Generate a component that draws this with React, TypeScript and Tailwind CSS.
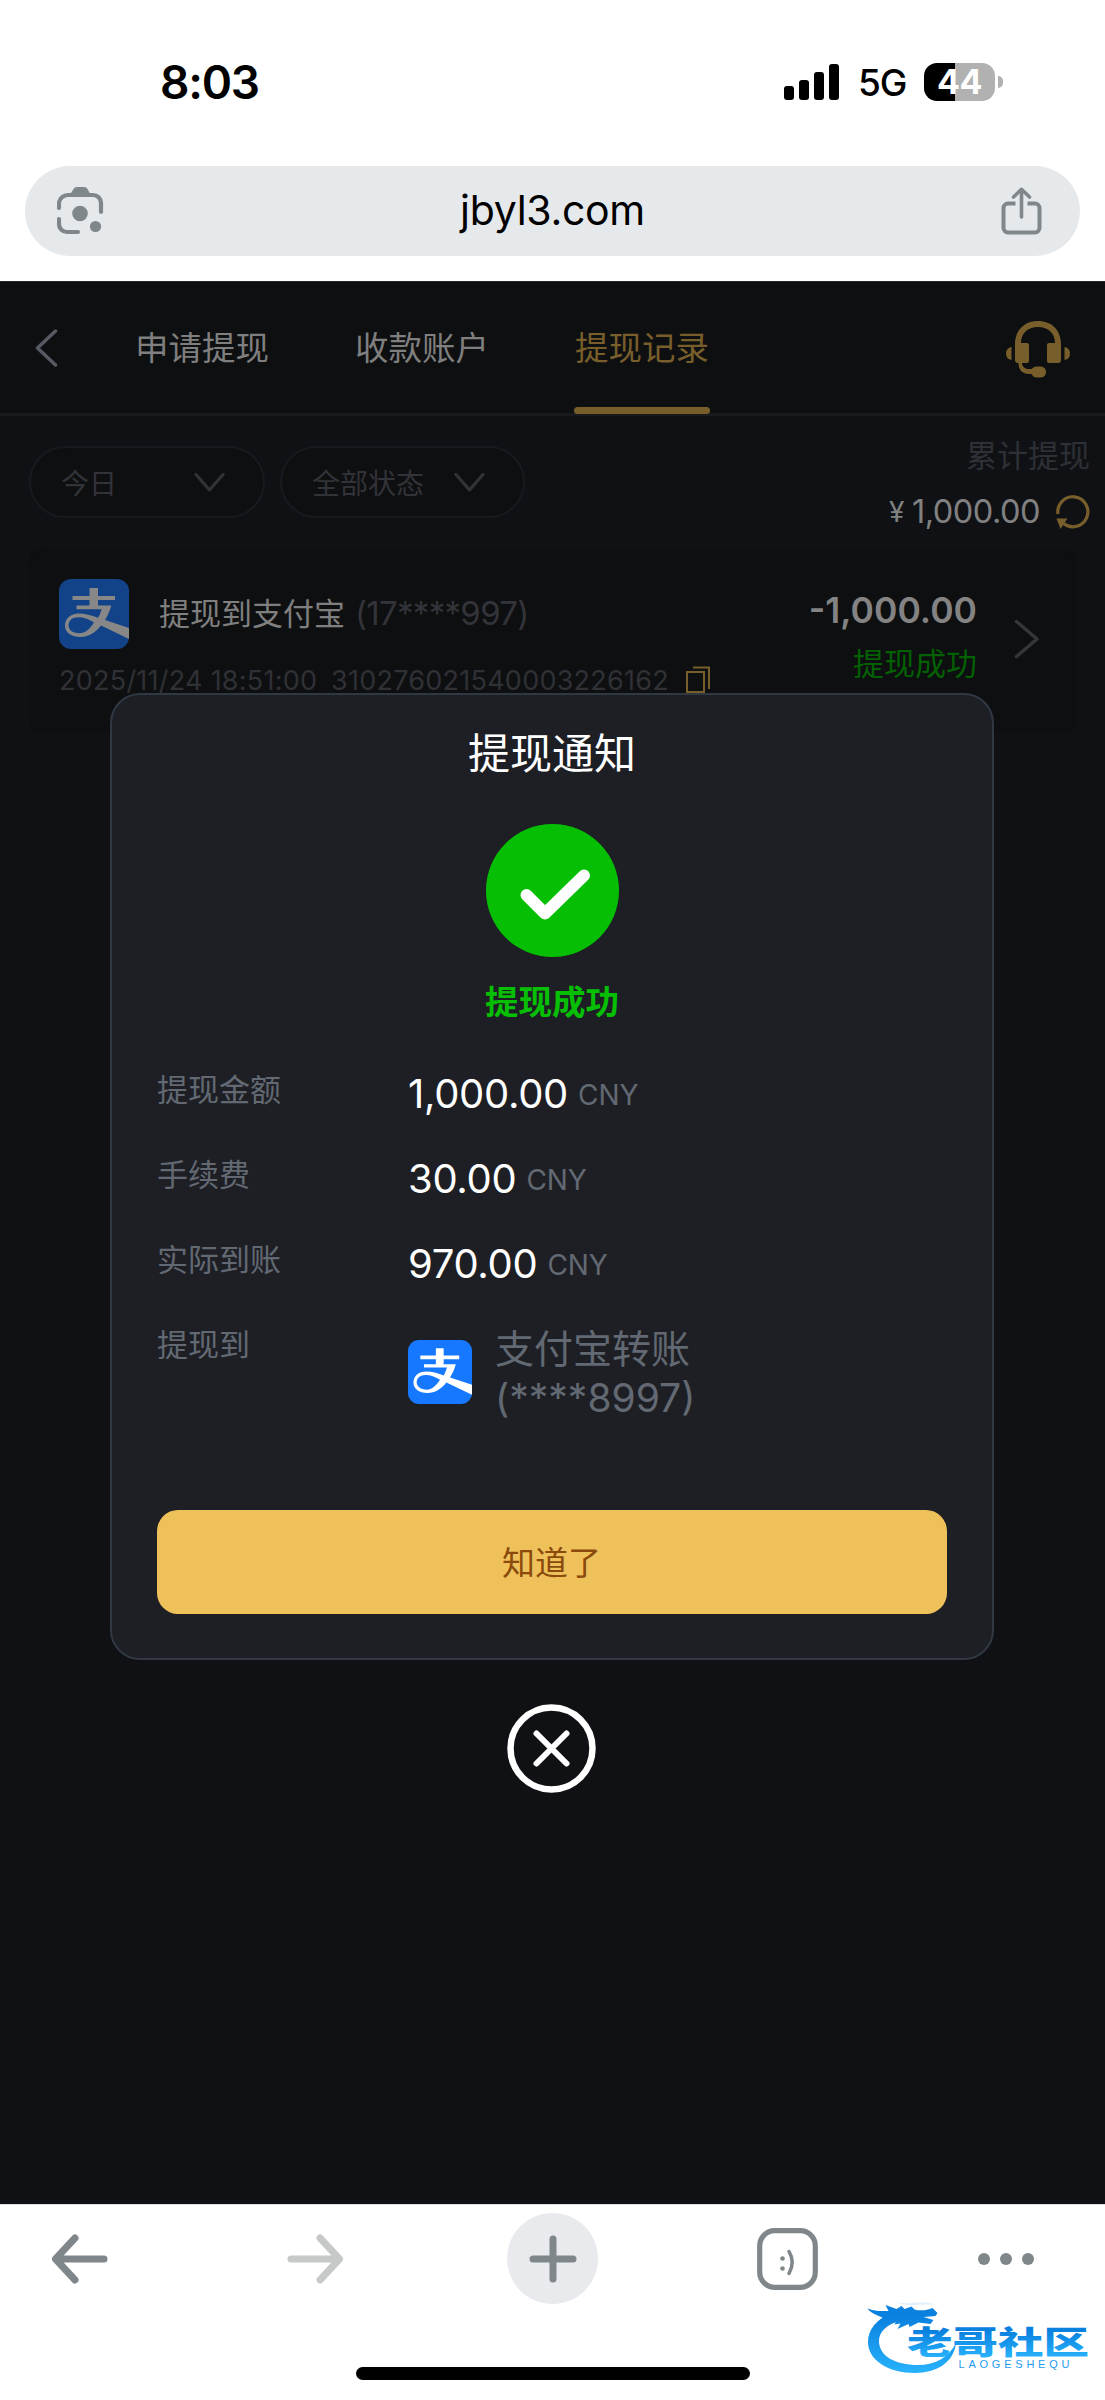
import { ReactNode } from 'react';

interface StrokeIconProps {
  d: string;
  className?: string;
  width: number;
  height: number;
  strokeWidth: number;
}

interface DetailRowProps {
  label: string;
  children: ReactNode;
}

const tabs = ['申请提现', '收款账户', '提现记录'];

const amounts = [
  { label: '提现金额', value: '1,000.00' },
  { label: '手续费', value: '30.00' },
  { label: '实际到账', value: '970.00' },
];

function StrokeIcon({ d, className, width, height, strokeWidth }: StrokeIconProps) {
  return (
    <svg
      className={className}
      width={width}
      height={height}
      viewBox={`0 0 ${width} ${height}`}
      fill="none"
      stroke="currentColor"
      strokeWidth={strokeWidth}
      strokeLinecap="round"
      strokeLinejoin="round"
    >
      <path d={d} />
    </svg>
  );
}

function AlipayIcon({ className }: { className?: string }) {
  return (
    <svg className={className} viewBox="0 0 70 70" fill="none">
      <rect width="70" height="70" rx="12" fill="#1677ff" />
      <path d="M30.500 9h8.500v8H56v4H39v5.500h13.300C50.800 32 48.500 37 46 41L70 49v11L42 46.500C36 54 29.500 58 21.500 58 11.500 58 6 53 6 46.500 6 39.500 11.500 34.500 20 34.500c6 0 12 1.800 19 4.300 1.700-2.700 2.800-5.400 3.600-8.600H17.500v-3.700h13V21h-17v-4h17z" fill="#fff" />
      <path d="M35 43.500C29.500 40 24.500 38.300 19.500 38.300c-6.500 0-10 3.500-10 8 0 5 4.500 8 11 8 5.500 0 10-4 14.500-10.800z" fill="#1677ff" />
    </svg>
  );
}

function StatusBar() {
  return (
    <div className="flex h-[166px] items-start justify-between pl-[160px] pr-[102px] pt-[58px]">
      <span className="text-[46px] font-semibold leading-[48px] tracking-[-1.2px]">8:03</span>
      <div className="flex items-center pt-1">
        <svg width="56" height="36" viewBox="0 0 56 36" className="mr-[18px]">
          <rect x="0" y="22" width="10" height="14" rx="3" />
          <rect x="15" y="16" width="10" height="20" rx="3" />
          <rect x="30" y="8" width="10" height="28" rx="3" />
          <rect x="45" y="0" width="10" height="36" rx="3" />
        </svg>
        <span className="mt-[3px] w-[66px] text-[37px] font-[450] leading-[36px] tracking-[-1px]">5G</span>
        <div className="flex h-[38px] w-[71px] items-center justify-center rounded-[13px] bg-[linear-gradient(90deg,#000_44%,#b1b1b1_44%)] text-[34px] font-bold tracking-[-0.5px] text-white">
          44
        </div>
        <div className="ml-[3px] h-[12px] w-[5px] rounded-r-full bg-[#b1b1b1]" />
      </div>
    </div>
  );
}

function AddressBar() {
  return (
    <div className="mx-[25px] mb-[25px] flex h-[90px] items-center justify-between rounded-full bg-[#e6e9ec] pl-[32px] pr-[38px] text-[#80878a]">
      <svg width="47" height="48" viewBox="0 0 47 48" fill="none">
        <path d="M2 21v-5.500A9 9 0 0 1 11 8h25a8 8 0 0 1 8 8v9M2 32v5a8 8 0 0 0 8 8h11" stroke="currentColor" strokeWidth="4.200" strokeLinecap="round" />
        <path d="M13 7.500l3.500-5.500Q17.500 0 20 0h7q2.500 0 3.500 2l3 5.500z" fill="currentColor" />
        <circle cx="23" cy="26.500" r="7.800" fill="currentColor" />
        <circle cx="38.500" cy="39.500" r="5.600" fill="currentColor" />
      </svg>
      <span className="-mt-[3px] text-[41px] leading-[50px] tracking-[-0.3px] text-black">jbyl3.com</span>
      <svg width="41" height="48" viewBox="0 0 41 48" fill="none" stroke="currentColor" strokeLinecap="round" strokeLinejoin="round">
        <path d="M14.500 16.500H7a4.500 4.500 0 0 0-4.500 4.500v20A4.500 4.500 0 0 0 7 45.500h27a4.500 4.500 0 0 0 4.500-4.500V21a4.500 4.500 0 0 0-4.500-4.500h-7.500" strokeWidth="4" strokeLinecap="butt" />
        <path d="M20.500 30V3M12.500 10l8-7.700 8 7.700" strokeWidth="3.600" />
      </svg>
    </div>
  );
}

function HeadsetIcon() {
  return (
    <svg width="64" height="57" viewBox="0 0 64 57" fill="#785e2b">
      <path d="M9 23C9 9 18.500 0 32 0s23 9 23 23v16q0 3-3 3H43q-2 0-2-2V24q0-2 2-2h6C49 12.500 42.500 6 32 6S15 12.500 15 22h6q2 0 2 2v16q0 2-2 2h-5c.5 4 3 6 7 6h2.500q2-2.500 5-2.500h3Q40 45.500 40 51t-6.500 5.500h-3q-3 0-5-3.500H23C16.500 53 12.500 49 12.500 42H12q-3 0-3-3z" />
      <path d="M5.500 26v13Q0 38 0 32.500T5.500 26zM58.500 26v13q5.500-1 5.500-6.500T58.500 26z" />
    </svg>
  );
}

function PageHeader() {
  return (
    <header className="flex h-[135px] border-b-[3px] border-t border-b-[#191a1d] border-t-[#26272a] bg-[#0e0f10] pl-[34px] pr-[35px]">
      <StrokeIcon className="mt-[47px] text-[#555a63]" width={24} height={38} strokeWidth={3.5} d="M21.500 2L3.500 19l18 17" />
      <nav className="ml-[76px] flex flex-1 gap-[84px]">
        {tabs.map((tab) => (
          <button
            key={tab}
            className={
              tab === '提现记录'
                ? 'flex h-[132px] w-[136px] flex-col justify-between pt-[42px] text-[33.500px] leading-[48px] text-[#785e2b]'
                : 'flex h-[132px] w-[136px] flex-col pt-[42px] text-[33.500px] leading-[48px] text-[#7f7f7f]'
            }
          >
            {tab}
            {tab === '提现记录' && <span className="h-[7px] w-full rounded-full bg-[#785e2b]" />}
          </button>
        ))}
      </nav>
      <div className="mt-[39px]">
        <HeadsetIcon />
      </div>
    </header>
  );
}

function Filters() {
  return (
    <div className="flex h-[133px] justify-between pl-[29px] pr-[15px]">
      <div className="flex gap-[15px] pt-[30px] text-[28px] text-[#323338]">
        <div className="flex h-[72px] w-[236px] items-center justify-between rounded-full border-2 border-[#191a20] bg-[#0e0f10] pl-[30px] pr-[38px]">
          <span className="mt-[3px]">今日</span>
          <StrokeIcon width={31} height={21} strokeWidth={3.2} d="M2 2.500L15.500 18 29 2.500" />
        </div>
        <div className="flex h-[72px] w-[245px] items-center justify-between rounded-full border-2 border-[#191a20] bg-[#0e0f10] pl-[30px] pr-[38px]">
          <span className="mt-[3px]">全部状态</span>
          <StrokeIcon width={31} height={21} strokeWidth={3.2} d="M2 2.500L15.500 18 29 2.500" />
        </div>
      </div>
      <div className="flex flex-col items-end pt-[16px]">
        <span className="text-[31px] leading-[48px] text-[#2d3034]">累计提现</span>
        <div className="mt-[8px] flex items-center text-[32.500px] leading-[48px] tracking-[-0.5px] text-[#818181]">
          <span className="mr-[8px] text-[28px]">¥</span>
          <span>1,000.00</span>
          <svg className="ml-[16px]" width="34" height="34" viewBox="0 0 34 34" fill="none">
            <path d="M2 19A15 15 0 1 1 7.500 28.500" stroke="#785e2b" strokeWidth="3.200" />
            <path d="M0.500 23.500h11L4.500 34z" fill="#785e2b" />
          </svg>
        </div>
      </div>
    </div>
  );
}

function RecordCard() {
  return (
    <div className="mx-[29px] flex h-[184px] rounded-xl bg-[#0e0f10] pl-[30px] pr-[36px]">
      <div className="flex-1 pt-[30px]">
        <div className="flex h-[70px] items-center">
          <AlipayIcon className="mr-[30px] h-[70px] w-[70px] opacity-50" />
          <span className="mt-[1px] text-[31px] text-[#7f7f7f]">提现到支付宝</span>
          <span className="ml-[10px] text-[33px] tracking-[-0.7px] text-[#33343a]">(17****997)</span>
        </div>
        <div className="mt-[12px] flex h-[40px] items-center text-[27px] tracking-[0.25px] text-[#303137]">
          <span className="w-[272px]">2025/11/24 18:51:00</span>
          <span>310276021540003226162</span>
          <svg className="ml-[16px] -mt-[2px]" width="26" height="28" viewBox="0 0 26 28" fill="none" stroke="#785e2b" strokeWidth="2">
            <path d="M2 6h17v20H2zM8 1.500h16V23" />
          </svg>
        </div>
      </div>
      <div className="flex flex-col items-end pt-[38px]">
        <span className="text-[35.500px] font-semibold leading-[48px] text-[#838383]">-1,000.00</span>
        <span className="mt-[7px] text-[31px] leading-[44px] text-[#036003]">提现成功</span>
      </div>
      <StrokeIcon className="ml-[37px] mt-[70px] text-[#35363b]" width={26} height={40} strokeWidth={3.5} d="M2.500 2.500L23 20 2.500 37.500" />
    </div>
  );
}

function DetailRow({ label, children }: DetailRowProps) {
  return (
    <div className="flex">
      <span className="w-[251px] pt-[1px] text-[31px] leading-[44px] text-[#626973]">{label}</span>
      {children}
    </div>
  );
}

function NoticeModal() {
  return (
    <div className="absolute left-[110px] top-[412px] flex w-[884px] flex-col items-center">
      <div className="flex h-[967px] w-full flex-col rounded-[30px] border-2 border-[#303843] bg-[#1e1f24] px-[45px]">
        <h2 className="mt-[29px] text-center text-[42px] leading-[60px] text-white">提现通知</h2>
        <svg className="mx-auto mt-[40px]" width="133" height="133" viewBox="0 0 133 133" fill="none">
          <circle cx="66.500" cy="66.500" r="66.500" fill="#06bf04" />
          <path d="M40.500 71L59 89.500 98 51.500" stroke="#fff" strokeWidth="12" strokeLinecap="round" strokeLinejoin="round" />
        </svg>
        <p className="mt-[21px] text-center text-[33.500px] font-bold leading-[48px] text-[#06bf04]">提现成功</p>

        <div className="mt-[41px] flex flex-col gap-[40px]">
          {amounts.map((item) => (
            <DetailRow key={item.label} label={item.label}>
              <p className="flex h-[44px] text-[40px] leading-[54px] tracking-[-0.3px] text-white">
                {item.value}
                <span className="ml-[10px] mt-[1px] text-[28px] tracking-[-0.1px] text-[#626973]">CNY</span>
              </p>
            </DetailRow>
          ))}
          <DetailRow label="提现到">
            <AlipayIcon className="mt-[18px] h-[64px] w-[64px]" />
            <div className="ml-[23px] mt-[2px] text-[39px] leading-[49px] text-[#626973]">
              <p>支付宝转账</p>
              <p>(****8997)</p>
            </div>
          </DetailRow>
        </div>

        <button className="mb-[44px] mt-auto h-[104px] w-full rounded-[21px] bg-[#efc15b] pr-[1px] pt-[4px] text-[33px] text-[#8a4a0b]">
          知道了
        </button>
      </div>
      <button className="mr-[2px] mt-[44px]">
        <svg width="89" height="89" viewBox="0 0 89 89" fill="none" stroke="#fff">
          <circle cx="44.500" cy="44.500" r="41" strokeWidth="6.500" />
          <path d="M29.500 29.500l30 30M59.500 29.500l-30 30" strokeWidth="6" strokeLinecap="round" />
        </svg>
      </button>
    </div>
  );
}

function CommunityLogo() {
  return (
    <svg className="absolute right-[13px] top-[95px]" width="226" height="80" viewBox="0 0 226 80">
      <defs>
        <linearGradient id="logoBlue" x1="0" y1="0" x2="0" y2="80" gradientUnits="userSpaceOnUse">
          <stop offset="0.200" stopColor="#0a80df" />
          <stop offset="0.900" stopColor="#27b1fb" />
        </linearGradient>
        <linearGradient id="textBlue" x1="0" y1="26" x2="0" y2="57" gradientUnits="userSpaceOnUse">
          <stop offset="0.150" stopColor="#0a80df" />
          <stop offset="1" stopColor="#27b1fb" />
        </linearGradient>
      </defs>
      <g fill="url(#logoBlue)">
        <path d="M27 12C10 19 2 30 2 42c0 18 20 31 47 31 22 0 39-11 41-30-7 14-20 22-38 22-23 0-39-9-39-24 0-9 7-16 20-20z" />
        <path d="M1.500 8.500c7 3 13 2.500 21 2.500l-3-6 11 4 5-3 3 3 7-2.500 3 3c6 1.500 12 1 18-1.500l5 5-2 3-12 1 10 3-3 4-12-1.500-9 4.500-1-3-11 5 3-5.500-6 1 2-4-9 1C14 14.500 5 14.500 1.500 8.500z" />
        <path d="M28 1c12 6 27-3 42 4-12-2-28 4-42-4z" opacity="0.120" />
      </g>
      <text
        x="41"
        y="53.500"
        fill="url(#textBlue)"
        fontFamily="Noto Sans CJK SC, sans-serif"
        fontWeight="900"
        fontSize="31.500"
        textLength="182"
        lengthAdjust="spacingAndGlyphs"
      >
        老哥社区
      </text>
      <text x="92.500" y="67.500" fill="#1f9cef" fontFamily="Liberation Sans, sans-serif" fontSize="11" textLength="111">
        LAOGESHEQU
      </text>
    </svg>
  );
}

function BrowserToolbar() {
  return (
    <footer className="relative h-[196px] border-t border-[#dadcdc] bg-white text-[#80878a]">
      <div className="flex items-center pl-[51px] pt-[8px]">
        <StrokeIcon width={58} height={50} strokeWidth={7} d="M53 25H5M24 4L4.500 25 24 46" />
        <StrokeIcon className="ml-[177px] text-[#c7c8c8]" width={58} height={50} strokeWidth={7} d="M5 25h48M34 4l19.500 21L34 46" />
        <div className="ml-[163px] flex h-[91px] w-[91px] items-center justify-center rounded-full bg-[#e8eaed]">
          <StrokeIcon width={48} height={48} strokeWidth={7} d="M24 4v40M4 24h40" />
        </div>
        <svg className="ml-[159px]" width="61" height="62" viewBox="0 0 61 62" fill="none" stroke="currentColor">
          <rect x="2.700" y="2.700" width="55.600" height="56.600" rx="15" strokeWidth="5.200" />
          <path d="M32 23.500q6.500 10.500 0 22" strokeWidth="3.500" strokeLinecap="round" />
          <circle cx="25.500" cy="30.500" r="2.300" fill="currentColor" stroke="none" />
          <circle cx="25.500" cy="40.500" r="2.300" fill="currentColor" stroke="none" />
        </svg>
        <svg className="ml-[159px]" width="58" height="12" viewBox="0 0 58 12" fill="currentColor">
          <circle cx="7" cy="6" r="6" />
          <circle cx="29" cy="6" r="6" />
          <circle cx="51" cy="6" r="6" />
        </svg>
      </div>
      <div className="ml-[356px] mt-[63px] h-[13px] w-[394px] rounded-full bg-black" />
      <CommunityLogo />
    </footer>
  );
}

export default function App() {
  return (
    <div className="flex h-[2400px] w-[1105px] flex-col overflow-hidden bg-white font-['Inter','Noto_Sans_CJK_SC',sans-serif] text-black">
      <StatusBar />
      <AddressBar />
      <main className="relative flex-1 bg-[#101115]">
        <PageHeader />
        <Filters />
        <RecordCard />
        <NoticeModal />
      </main>
      <BrowserToolbar />
    </div>
  );
}
